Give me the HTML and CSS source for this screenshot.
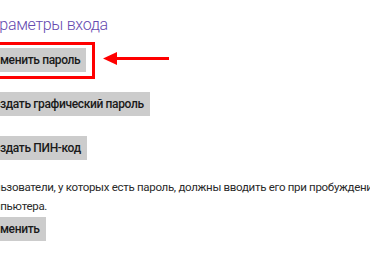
FILE: index.html
```html
<!DOCTYPE html>
<html lang="ru">
<head>
<meta charset="utf-8">
<link rel="stylesheet" href="styles.css">
</head>
<body>
<main class="page">
  <h1 class="title">Параметры входа</h1>
  <div class="row highlighted">
    <button class="btn">Изменить пароль</button>
    <span class="frame"></span>
    <svg class="arrow" width="66" height="14" viewBox="0 0 66 14">
      <polygon points="0,6.5 14,0 14,13" fill="#ff0000"/>
      <rect x="12" y="5" width="54" height="3" fill="#ff0000"/>
    </svg>
  </div>
  <div class="row"><button class="btn">Создать графический пароль</button></div>
  <div class="row"><button class="btn">Создать ПИН-код</button></div>
  <p class="note">Пользователи, у которых есть пароль, должны вводить его при пробуждении компьютера.</p>
  <div class="row last"><button class="btn">Изменить</button></div>
</main>
</body>
</html>
```
FILE: styles.css
```css
html, body {
  margin: 0;
  padding: 0;
  background: #ffffff;
  overflow: hidden;
}
body {
  width: 370px;
  height: 260px;
  font-family: Roboto, "Noto Sans", sans-serif;
  color: #1f1f1f;
}
.page {
  margin-left: -20px;
  width: 430px;
  display: flex;
  flex-direction: column;
  align-items: flex-start;
}
.title {
  margin: 11px 0 0 0;
  font-size: 16px;
  font-weight: 300;
  letter-spacing: -0.3px;
  line-height: 28px;
  color: #6549b0;
}
.row {
  position: relative;
  margin-top: 9px;
}
.row + .row {
  margin-top: 20px;
}
.btn {
  display: block;
  height: 24px;
  margin: 0;
  padding: 0 6px;
  border: none;
  background: #cccccc;
  font-family: Roboto, "Noto Sans", sans-serif;
  font-size: 12px;
  font-weight: 500;
  letter-spacing: -0.35px;
  color: #1a1a1a;
  line-height: 24px;
}
.frame {
  position: absolute;
  left: -8px;
  right: -9px;
  top: -6px;
  bottom: -7px;
  border: 3px solid #ff0000;
}
.arrow {
  position: absolute;
  left: calc(100% + 17px);
  top: 4px;
}
.note {
  margin: 18px 0 0 0;
  width: 420px;
  font-size: 11.5px;
  letter-spacing: -0.3px;
  line-height: 19px;
  color: #2a2a2a;
}
.row.last {
  margin-top: 1px;
}
```
